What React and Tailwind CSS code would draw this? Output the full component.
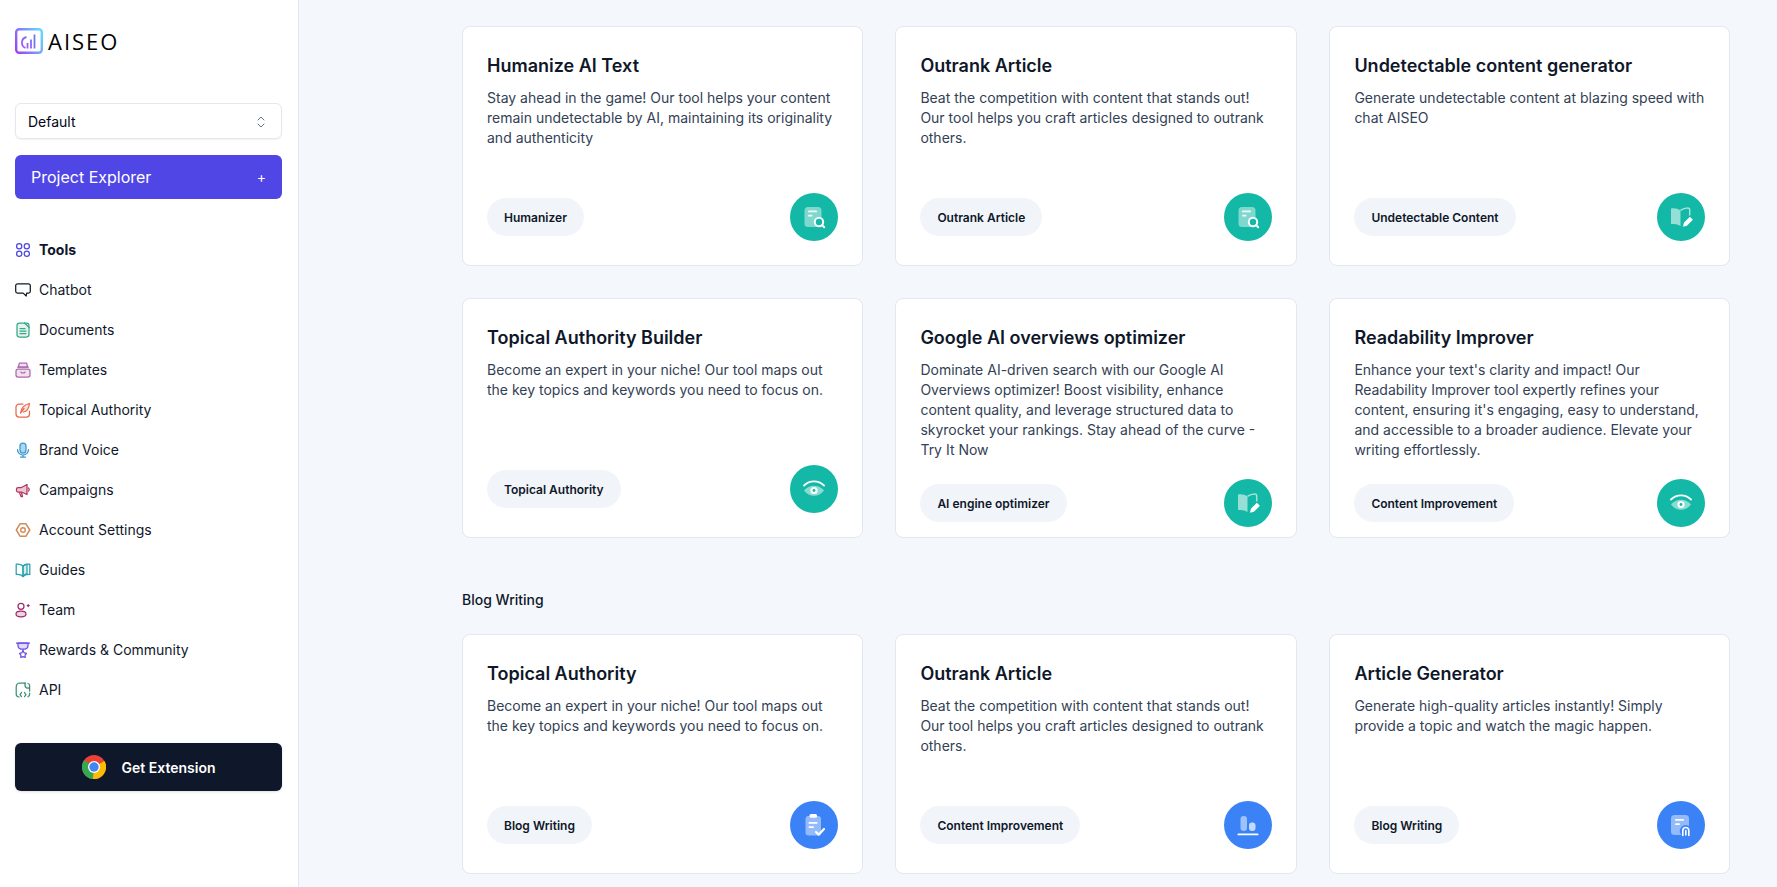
import React from "react";

const I = ({ c, children }) => (
  <svg width="16" height="16" viewBox="0 0 16 16" fill="none" stroke={c} strokeWidth="1.25" strokeLinecap="round" strokeLinejoin="round" className="shrink-0">
    {children}
  </svg>
);

const nav = [
  { t: "Tools", bold: true, i: <I c="#4f46e5"><circle cx="4.200" cy="4.200" r="2.600" /><circle cx="11.800" cy="4.200" r="2.600" /><circle cx="4.200" cy="11.800" r="2.600" /><circle cx="11.800" cy="11.800" r="2.600" /></I> },
  { t: "Chatbot", i: <I c="#111827"><path d="M2.500 1.800h11a1.800 1.800 0 0 1 1.800 1.800v5.600a1.900 1.900 0 0 1-1.800 1.900h-1.800l-.5 2.900-3-2.900H2.500A1.900 1.900 0 0 1 .7 9.200V3.600a1.800 1.800 0 0 1 1.800-1.800z" /></I> },
  { t: "Documents", i: <I c="#35a886"><rect x="2" y="1" width="12" height="14" rx="2.400" fill="#35a88622" /><path d="M9.500 1 14 5.400" /><path d="M5 6.500h5M5 9h6M5 11.500h6" /></I> },
  { t: "Templates", i: <I c="#ad68ad"><path d="M4.400 1.200h7.200l1 3.800H3.400z" fill="#ad68ad33" /><path d="M2.600 5h10.800" /><rect x="1" y="7" width="14" height="8" rx="2" fill="#ad68ad33" /><path d="M6 10.200c1 1 3 1 4 0" /></I> },
  { t: "Topical Authority", i: <I c="#e96a4f"><path d="M8 2H4a3 3 0 0 0-3 3v7a3 3 0 0 0 3 3h7.500a3 3 0 0 0 3-3V9" /><path d="M6 10c0-4 3.500-7.500 8.500-8.500-.6 5-3 8-6 8.500" fill="#e96a4f33" /><path d="M5.500 11 9 6.500" /></I> },
  { t: "Brand Voice", i: <I c="#3699cf"><rect x="5" y="1" width="6" height="10" rx="3" fill="#3699cf66" /><path d="M2.500 7.500a5.500 5.500 0 0 0 11 0M8 13v2M5.500 15h5" /></I> },
  { t: "Campaigns", i: <I c="#b2355e"><path d="M3 5.500h3.500L12 2.500v10L6.500 10H3a1.500 1.500 0 0 1-1.500-1.500V7A1.500 1.500 0 0 1 3 5.500z" fill="#b2355e44" /><path d="M4.500 10.500 6 14.500h1.500L6.500 10.500M13.500 6a2 2 0 0 1 0 3" /></I> },
  { t: "Account Settings", i: <I c="#d28c5c"><path d="M5 1.800h6L14.700 8 11 14.200H5L1.300 8z" strokeWidth="1.500" /><circle cx="8" cy="8" r="2.300" strokeWidth="1.400" /></I> },
  { t: "Guides", i: <I c="#27a3ad"><path d="M8 4C6.500 2.500 4 2 1.200 2.200v10.300C4 12.300 6.500 13 8 14.500c1.500-1.500 4-2.200 6.800-2V2.200C12 2 9.500 2.500 8 4z" /><path d="M8 4v10.500" /><path d="M8 4c1-1 2.500-1.600 4-1.800v9.500c-1.500.2-3 1-4 2.800z" fill="#27a3ad33" /></I> },
  { t: "Team", i: <I c="#a12b69"><circle cx="6" cy="4.300" r="3" /><ellipse cx="6" cy="12" rx="5" ry="2.800" fill="#a12b6933" /><path d="M12.200 3.500h2M13.200 2.500v2" /></I> },
  { t: "Rewards & Community", i: <I c="#6b4de6"><path d="M3 1.200h10v2.200c0 2.500-2.200 3.800-5 3.800s-5-1.300-5-3.800z" fill="#6b4de633" /><path d="M1.500 1.200h13M8 7.500v1.500" /><path d="m8 8.800 1.300 2 2.200.6-1.400 1.800.1 2.200L8 14.600l-2.200.8.100-2.200-1.400-1.800 2.200-.6z" /></I> },
  { t: "API", i: <I c="#3f8e78"><path d="M4 15a3 3 0 0 1-2.800-3V5A4 4 0 0 1 5 1h5.500M13 1.500a2 2 0 0 1 1.600 2V9M14.600 11v1a3 3 0 0 1-1.600 2.800" /><path d="M10 1v2.500A2.500 2.500 0 0 0 12.500 6h2" fill="#3f8e7822" /><path d="M6.500 10.500 5 12.500l1.500 2M9.500 10.500l1.500 2-1.500 2" /></I> },
];

const Glyph = ({ children }) => (
  <svg width="24" height="24" viewBox="0 0 24 24" fill="none" className="shrink-0">{children}</svg>
);

const DocSearch = ({ bg }) => (
  <Glyph>
    <rect x="2.500" y="2" width="17" height="20" rx="3.500" fill="#fff" fillOpacity=".45" />
    <rect x="6" y="5.500" width="9" height="1.800" rx=".9" fill="#fff" fillOpacity=".9" />
    <rect x="6" y="9.800" width="4.500" height="1.800" rx=".9" fill="#fff" fillOpacity=".9" />
    <circle cx="17" cy="17" r="4.200" fill={bg} stroke="#fff" strokeWidth="2" />
    <path d="m20.300 20.300 1.900 1.900" stroke="#fff" strokeWidth="2" strokeLinecap="round" />
  </Glyph>
);
const BookPen = () => (
  <Glyph>
    <path d="M2 3.500c3.200-.6 7 0 9.500 1.900V21c-2.500-1.900-6.300-2.500-9.500-1.900z" fill="#fff" fillOpacity=".55" />
    <path d="M11.500 5.400c1.800-1.400 4.700-2.400 7.300-2.400 1.200 0 1.900.8 1.900 1.800v5.700" stroke="#fff" strokeOpacity=".6" strokeWidth="1.500" fill="none" />
    <path d="m14 21.800.9-4 6-6 3 3-6 6z" fill="#fff" />
  </Glyph>
);
const Eye = ({ bg }) => (
  <Glyph>
    <path d="M2 8.500C7.500 3 16.500 3 22 8.500" stroke="#fff" strokeWidth="1.800" strokeLinecap="round" />
    <path d="M2 13.500c5-6.500 15-6.500 20 0-5 7-15 7-20 0z" fill="#fff" fillOpacity=".5" />
    <circle cx="12" cy="13.500" r="3.600" fill="#fff" />
    <circle cx="12" cy="13.500" r="1.400" fill={bg} />
  </Glyph>
);
const Clip = () => (
  <Glyph>
    <rect x="3.500" y="3" width="15.500" height="19.500" rx="3" fill="#fff" fillOpacity=".45" />
    <rect x="7.500" y="1" width="7.500" height="3.800" rx="1.500" fill="#fff" />
    <rect x="6.500" y="9" width="9" height="1.800" rx=".9" fill="#fff" />
    <rect x="6.500" y="13.200" width="5.500" height="1.800" rx=".9" fill="#fff" />
    <path d="m14 19 2.700 2.700 5.300-5.700" stroke="#fff" strokeWidth="2.200" strokeLinecap="round" strokeLinejoin="round" />
  </Glyph>
);
const Bars = () => (
  <Glyph>
    <rect x="4.500" y="3" width="6.500" height="15" rx="3" fill="#fff" fillOpacity=".5" />
    <rect x="13" y="9.500" width="6.500" height="8.500" rx="3" fill="#fff" fillOpacity=".7" />
    <rect x="1.500" y="20.500" width="21" height="1.800" rx=".9" fill="#fff" />
  </Glyph>
);
const DocAttach = ({ bg }) => (
  <Glyph>
    <rect x="2" y="2" width="18" height="20" rx="3.500" fill="#fff" fillOpacity=".45" />
    <rect x="6" y="6" width="9" height="1.800" rx=".9" fill="#fff" />
    <rect x="6" y="10.200" width="5" height="1.800" rx=".9" fill="#fff" />
    <circle cx="16.800" cy="18" r="6" fill={bg} />
    <path d="M13.800 22.500v-5a3 3 0 0 1 6 0v5M16.800 22v-4.500" stroke="#fff" strokeWidth="1.600" strokeLinecap="round" />
  </Glyph>
);

const TEAL = "#14b8a6";
const BLUE = "#3b82f6";

const row1 = [
  { title: "Humanize AI Text", desc: "Stay ahead in the game! Our tool helps your content remain undetectable by AI, maintaining its originality and authenticity", pill: "Humanizer", icon: <DocSearch bg={TEAL} /> },
  { title: "Outrank Article", desc: "Beat the competition with content that stands out! Our tool helps you craft articles designed to outrank others.", pill: "Outrank Article", icon: <DocSearch bg={TEAL} /> },
  { title: "Undetectable content generator", desc: "Generate undetectable content at blazing speed with chat AISEO", pill: "Undetectable Content", icon: <BookPen /> },
  { title: "Topical Authority Builder", desc: "Become an expert in your niche! Our tool maps out the key topics and keywords you need to focus on.", pill: "Topical Authority", icon: <Eye bg={TEAL} /> },
  { title: "Google AI overviews optimizer", desc: "Dominate AI-driven search with our Google AI Overviews optimizer! Boost visibility, enhance content quality, and leverage structured data to skyrocket your rankings. Stay ahead of the curve - Try It Now", pill: "AI engine optimizer", icon: <BookPen /> },
  { title: "Readability Improver", desc: "Enhance your text's clarity and impact! Our Readability Improver tool expertly refines your content, ensuring it's engaging, easy to understand, and accessible to a broader audience. Elevate your writing effortlessly.", pill: "Content Improvement", icon: <Eye bg={TEAL} /> },
];
const row2 = [
  { title: "Topical Authority", desc: "Become an expert in your niche! Our tool maps out the key topics and keywords you need to focus on.", pill: "Blog Writing", icon: <Clip /> },
  { title: "Outrank Article", desc: "Beat the competition with content that stands out! Our tool helps you craft articles designed to outrank others.", pill: "Content Improvement", icon: <Bars /> },
  { title: "Article Generator", desc: "Generate high-quality articles instantly! Simply provide a topic and watch the magic happen.", pill: "Blog Writing", icon: <DocAttach bg={BLUE} /> },
];

function Card({ c, color }) {
  return (
    <div className="flex h-[240px] flex-col rounded-lg border border-[#e2e8f0] bg-white px-6 pt-[25px] pb-6">
      <h3 className="text-lg leading-7 font-semibold text-[#0f172a]">{c.title}</h3>
      <p className="mt-2 text-sm leading-5 text-[#334155]">{c.desc}</p>
      <div className="mt-auto flex items-center justify-between pt-[19px]">
        <span className="flex h-[38px] items-center rounded-full bg-[#f1f5f9] px-[17px] pt-px text-xs font-semibold text-[#0f172a]">{c.pill}</span>
        <span className={"flex h-12 w-12 items-center justify-center rounded-full " + color}>{c.icon}</span>
      </div>
    </div>
  );
}

export default function App() {
  return (
    <div className="flex h-[887px] w-full overflow-hidden bg-[#f4f7fb] font-[Inter,sans-serif] text-[#0f172a]">
      <aside className="flex w-[299px] shrink-0 flex-col border-r border-[#e2e8f0] bg-white pr-[16px] pl-[15px]">
        <div className="mt-[28px] flex h-[26px] items-center gap-[5px]">
          <svg width="28" height="26" viewBox="0 0 28 26" fill="none">
            <defs>
              <linearGradient id="lg" x1="0" y1="20" x2="28" y2="6" gradientUnits="userSpaceOnUse">
                <stop offset="0" stopColor="#a040f5" />
                <stop offset="1" stopColor="#60dcff" />
              </linearGradient>
              <linearGradient id="lg2" x1="6" y1="20" x2="21" y2="7" gradientUnits="userSpaceOnUse">
                <stop offset="0" stopColor="#b455f7" />
                <stop offset="1" stopColor="#5d7ff0" />
              </linearGradient>
            </defs>
            <rect x="1.200" y="1.200" width="25.600" height="23.600" rx="3" stroke="url(#lg)" strokeWidth="2.400" />
            <path d="M11.500 9A5.800 5.800 0 0 0 7 14.800 5.500 5.500 0 0 0 10.500 20" stroke="url(#lg2)" strokeWidth="1.800" />
            <path d="M12.500 20.500v-5.500M16 20.500v-9M19.500 20.500V6.500" stroke="url(#lg2)" strokeWidth="1.800" />
          </svg>
          <span className="font-['Open_Sans',sans-serif] text-[22px] leading-none tracking-[2px] text-black">AISEO</span>
        </div>

        <div className="mt-[49px] flex h-[36px] items-center justify-between rounded-md border border-[#e2e8f0] bg-white pt-px pr-[15px] pl-3 shadow-xs">
          <span className="text-sm text-[#020617]">Default</span>
          <svg width="10" height="14" viewBox="0 0 10 14" fill="none" stroke="#64748b" strokeWidth="1" strokeLinecap="round" strokeLinejoin="round">
            <path d="m2 5 3-3 3 3M2 9l3 3 3-3" />
          </svg>
        </div>

        <div className="mt-4 flex h-11 items-center justify-between rounded-md bg-[#4f46e5] pr-4 pl-4 text-white">
          <span className="text-base">Project Explorer</span>
          <span className="text-sm">+</span>
        </div>

        <nav className="mt-[31px] flex flex-col">
          {nav.map((n) => (
            <div key={n.t} className="flex h-10 items-center gap-2">
              {n.i}
              <span className={"text-sm text-[#0f172a] " + (n.bold ? "font-bold" : "")}>{n.t}</span>
            </div>
          ))}
        </nav>

        <div className="mt-[33px] flex h-12 items-center justify-center gap-4 rounded-md bg-[#0f172a] shadow-sm">
          <svg width="24" height="24" viewBox="0 0 24 24">
            <circle cx="12" cy="12" r="12" fill="#ea4335" />
            <path d="M12 12 2.100 5.200A12 12 0 0 0 10.900 24L12 12z" fill="#34a853" />
            <path d="M12 12 22.400 6A12 12 0 0 1 10.900 24L12 12z" fill="#fbbc04" />
            <circle cx="12" cy="12" r="6" fill="#fff" />
            <circle cx="12" cy="12" r="4.700" fill="#4285f4" />
          </svg>
          <span className="mt-[2px] text-sm font-semibold text-white">Get Extension</span>
        </div>
      </aside>

      <main className="ml-[163px] w-[1267.800px] shrink-0 pt-[26px]">
        <div className="grid grid-cols-[401px_401.600px_400.400px] gap-x-[32.400px] gap-y-8">
          {row1.map((c, i) => <Card key={i} c={c} color="bg-[#14b8a6]" />)}
        </div>
        <h2 className="mt-[52px] mb-[24px] h-5 text-sm leading-5 font-medium text-[#0f172a]">Blog Writing</h2>
        <div className="grid grid-cols-[401px_401.600px_400.400px] gap-x-[32.400px]">
          {row2.map((c, i) => <Card key={i} c={c} color="bg-[#3b82f6]" />)}
        </div>
      </main>
    </div>
  );
}
